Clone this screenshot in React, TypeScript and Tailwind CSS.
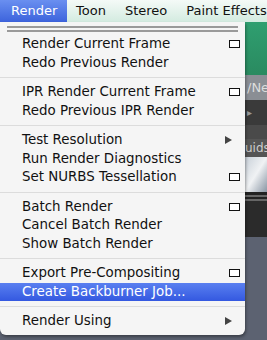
import React from 'react';

type Item = { label: string; box?: boolean; arrow?: boolean; active?: boolean };

const groups: Item[][] = [
  [{ label: 'Render Current Frame', box: true }, { label: 'Redo Previous Render' }],
  [{ label: 'IPR Render Current Frame', box: true }, { label: 'Redo Previous IPR Render' }],
  [
    { label: 'Test Resolution', arrow: true },
    { label: 'Run Render Diagnostics' },
    { label: 'Set NURBS Tessellation', box: true },
  ],
  [{ label: 'Batch Render', box: true }, { label: 'Cancel Batch Render' }, { label: 'Show Batch Render' }],
  [{ label: 'Export Pre-Compositing', box: true }, { label: 'Create Backburner Job...', active: true }],
  [{ label: 'Render Using', arrow: true }],
];

const MenuRow = ({ item }: { item: Item }) => (
  <div
    className={
      'flex h-[18.5px] items-center justify-between pl-[22px] pr-[5px] ' +
      (item.active ? 'bg-gradient-to-b from-[#5a7ff0] to-[#3458e0] text-white' : 'text-[#111]')
    }
  >
    <span>{item.label}</span>
    {item.box && <span className="h-[8px] w-[11px] border border-[#111] bg-white" />}
    {item.arrow && (
      <svg width="8" height="8" viewBox="0 0 8 8" className="mr-[7px]">
        <path d="M0 0 L7 4 L0 8 Z" fill="#444" />
      </svg>
    )}
  </div>
);

export default function App() {
  return (
    <div className="relative h-[340px] w-[267px] overflow-hidden bg-[#5c6271] text-[13.4px] [font-family:'DejaVu_Sans',sans-serif]">
      {/* menu bar */}
      <div className="flex h-[22px] items-center overflow-hidden whitespace-nowrap bg-gradient-to-b from-[#f4faf7] to-[#d3ebe0] text-[13px] text-[#111]">
        <div className="flex h-full w-[67px] shrink-0 items-center bg-gradient-to-b from-[#6a8ff0] to-[#3d63dc] pl-[11px] text-white">
          Render
        </div>
        <span className="ml-[9px]">Toon</span>
        <span className="ml-[19px]">Stereo</span>
        <span className="ml-[19px]">Paint Effects</span>
      </div>

      {/* app content behind the menu */}
      <div className="flex h-[318px] flex-col pl-[245px]">
        <div className="h-[53px] bg-gradient-to-b from-[#2f9f70] to-[#2a8a60]" />
        <div className="flex h-[25px] items-center overflow-hidden whitespace-nowrap bg-[#8a8e94] pl-[2px] text-[13px] text-[#ddd]">/Ne</div>
        <div className="flex h-[25px] items-center bg-[#3a3a3a] pl-[2px] text-[10px] text-[#999]">▸</div>
        <div className="h-[14px] bg-[#4a4a4a]" />
        <div className="flex h-[18px] items-center overflow-hidden whitespace-nowrap bg-[#555] text-[12px] text-[#ccc]">uids</div>
        <div className="h-[35px] bg-gradient-to-br from-[#c8d0d8] via-[#f0f2f4] to-[#8a96a4]" />
        <div className="h-[3px] bg-[#222]" />
        <div className="h-[2px] bg-[#666]" />
        <div className="h-[2px] bg-[#222]" />
        <div className="h-[2px] bg-[#666]" />
        <div className="h-[36px] bg-[#2b2b2b]" />
        <div className="flex-1 bg-[#5c6271]" />
      </div>

      {/* dropdown menu */}
      <div className="absolute left-0 top-[22px] w-[245px] rounded-b-[6px] bg-[#f5f5f5] pb-[4px] shadow-[1px_2px_3px_rgba(0,0,0,0.35)]">
        <div className="flex h-[13px] flex-col justify-center gap-[2px] px-[7px]">
          <div className="h-[2px] bg-[#9a9a9a]" />
          <div className="h-[2px] bg-[#9a9a9a]" />
        </div>
        {groups.map((group, gi) => (
          <div key={gi}>
            {gi > 0 && (
              <div className="flex h-[11px] items-center">
                <div className="h-px w-full bg-[#dcdcdc]" />
              </div>
            )}
            {group.map((item) => (
              <MenuRow key={item.label} item={item} />
            ))}
          </div>
        ))}
      </div>
    </div>
  );
}
